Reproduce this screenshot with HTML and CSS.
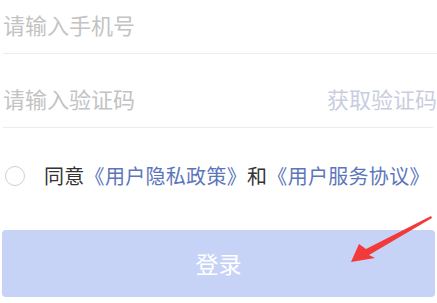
FILE: index.html
```html
<!DOCTYPE html>
<html lang="zh-CN">
<head>
  <meta charset="UTF-8" />
  <meta name="viewport" content="width=device-width, initial-scale=1.0" />
  <title>登录</title>
  <link rel="stylesheet" href="styles.css">
</head>
<body>
  <div class="login">
    <div class="field field-first">
      <input type="text" class="field-input" placeholder="请输入手机号">
    </div>
    <div class="field">
      <input type="text" class="field-input" placeholder="请输入验证码">
      <span class="get-code">获取验证码</span>
    </div>

    <div class="agree">
      <span class="check"></span>
      <span class="agree-text">同意<a class="link">《用户隐私政策》</a>和<a class="link">《用户服务协议》</a></span>
    </div>

    <div class="submit-wrap">
      <div class="submit">登录</div>
      <!-- annotation arrow -->
      <svg class="arrow" width="100" height="60" viewBox="0 0 100 60">
        <polygon points="14,46 22,28 29,33 94,0 95,2 32,39 38,42" fill="#f23a3a"/>
      </svg>
    </div>
  </div>
</body>
</html>
```

FILE: styles.css
```css
body {
  margin: 0;
  background: #fff;
  font-family: "Noto Sans CJK SC", "Noto Sans", sans-serif;
  overflow: hidden;
}
.login {
  padding: 0 2px 0 3px;
}
.field {
  display: flex;
  align-items: flex-start;
  height: 74px;
  padding-top: 29px;
  box-sizing: border-box;
  border-bottom: 1px solid #ececec;
  margin-right: 2px;
}
.field-first {
  height: 54px;
  padding-top: 9px;
  margin-right: -2px;
}
.field-input {
  flex: 1;
  border: none;
  outline: none;
  padding: 0;
  height: 30px;
  font-family: inherit;
  font-size: 22px;
  line-height: 30px;
  background: transparent;
  min-width: 0;
}
.field-input::placeholder {
  color: #c3c3c3;
}
.get-code {
  font-size: 22px;
  line-height: 30px;
  color: #cacde0;
  margin-right: -4px;
}
.agree {
  display: flex;
  align-items: center;
  height: 96px;
  padding-left: 2px;
  padding-bottom: 4px;
}
.check {
  width: 18px;
  height: 18px;
  border: 1.5px solid #cfcfcf;
  border-radius: 50%;
  margin-right: 19px;
}
.agree-text {
  font-size: 20px;
  line-height: 26px;
  color: #333;
  letter-spacing: 0.3px;
}
.link {
  color: #5d76bb;
}
.submit-wrap {
  position: relative;
  padding-top: 2px;
}
.submit {
  height: 67px;
  line-height: 67px;
  border-radius: 4px;
  background: #c6d3f6;
  color: #fff;
  text-align: center;
  font-size: 23px;
  margin-left: -1px;
}
.arrow {
  position: absolute;
  left: 334px;
  top: -12px;
}
```
